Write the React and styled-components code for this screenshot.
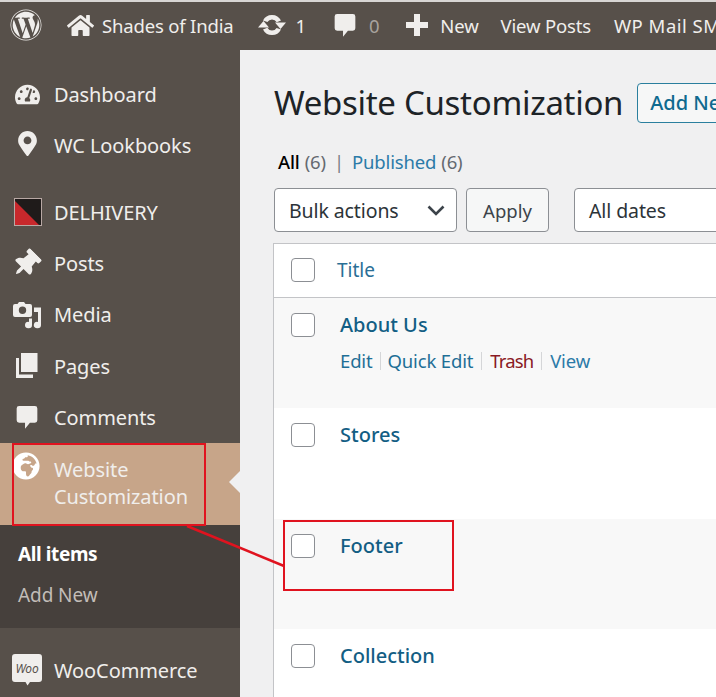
import styled, { createGlobalStyle } from 'styled-components';
import { FaWordpress, FaHome, FaThumbtack, FaGlobeAfrica, FaTachometerAlt, FaMapMarkerAlt } from 'react-icons/fa';

const Global = createGlobalStyle`
  html, body { margin: 0; padding: 0; background: #f0f0f1; }
  body { font-family: "Noto Sans", "Open Sans", sans-serif; overflow: hidden; }
  * { box-sizing: border-box; }
`;

const Page = styled.div`
  position: relative;
  width: 716px;
  height: 697px;
  overflow: hidden;
  display: flex;
  flex-direction: column;
`;

const TopBar = styled.div`
  height: 50px;
  flex: none;
  display: flex;
  align-items: center;
  background: #57504a;
  border-top: 2px solid #d8d6d4;
  color: #f0eeec;
  font-size: 18.5px;
  white-space: nowrap;
  padding: 0 0 2px 10px;
`;

const BarItem = styled.span`
  display: flex;
  align-items: center;
  flex: none;
  margin-left: ${p => p.$ml || 0}px;
  gap: ${p => p.$gap || 0}px;
  color: ${p => p.$dim ? '#a8a39e' : 'inherit'};
  letter-spacing: ${p => p.$wide ? '0.5px' : '-0.17px'};
`;

const Body = styled.div`
  flex: 1;
  display: flex;
  min-height: 0;
`;

const Sidebar = styled.nav`
  width: 240px;
  flex: none;
  background: #57504a;
  padding-top: 19px;
  color: #f0eeec;
`;

const MenuItem = styled.div`
  position: relative;
  display: flex;
  align-items: ${p => p.$tall ? 'flex-start' : 'center'};
  height: ${p => p.$tall ? 82 : 51.2}px;
  margin-top: ${p => p.$sep || 0}px;
  padding: ${p => p.$tall ? '13px 0 0' : 0};
  background: ${p => p.$active ? '#c7a589' : 'transparent'};
  font-size: 20px;
  line-height: 27px;
  letter-spacing: -0.1px;
`;

const MenuIcon = styled.span`
  width: 54px;
  flex: none;
  display: flex;
  justify-content: center;
  transform: translate(${p => p.$dx ?? 0}px, ${p => p.$dy ?? 0}px);
`;

const Notch = styled.span`
  position: absolute;
  right: 0;
  top: 28px;
  border: 11px solid transparent;
  border-right-color: #f0f0f1;
  border-left-width: 0;
`;

const SubMenu = styled.div`
  height: 103px;
  background: #46403c;
  padding: 9px 18px;
  font-size: 19px;
`;

const SubItem = styled.div`
  height: 41px;
  display: flex;
  align-items: center;
  font-weight: ${p => p.$current ? 700 : 400};
  color: ${p => p.$current ? '#ffffff' : '#c2bdb8'};
  letter-spacing: ${p => p.$current ? '-0.4px' : '-0.1px'};
`;

const Main = styled.main`
  flex: 1;
  min-width: 0;
  padding: 0 0 0 33px;
  overflow: hidden;
`;

const HeadRow = styled.div`
  display: flex;
  align-items: center;
  height: 39px;
  margin-top: 33px;
  white-space: nowrap;
`;

const Heading = styled.h1`
  margin: 0 0 0 1px;
  font-size: 33px;
  font-weight: 400;
  color: #1d2327;
  letter-spacing: -0.3px;
`;

const AddNew = styled.span`
  margin-left: 14px;
  height: 40px;
  flex: none;
  border: 1px solid #2a7f9e;
  border-radius: 4px;
  padding: 0 12px;
  display: flex;
  align-items: center;
  background: #f6f7f7;
  color: #0f6a8f;
  font-size: 20px;
  font-weight: 500;
`;

const Filters = styled.div`
  margin: 26px 0 0 5px;
  height: 26px;
  display: flex;
  align-items: center;
  gap: 5px;
  font-size: 18.5px;
  color: #646970;
  letter-spacing: -0.15px;
  white-space: nowrap;
`;

const FilterCurrent = styled.span`
  color: #000;
  font-weight: 500;
`;

const FilterLink = styled.span`
  color: #2c7ba8;
`;

const Divider = styled.span`
  color: #7b8086;
  margin: 0 3px;
`;

const Toolbar = styled.div`
  display: flex;
  margin: 14px 0 0 1px;
  white-space: nowrap;
`;

const SelectBox = styled.div`
  width: ${p => p.$w}px;
  height: 44px;
  flex: none;
  margin-left: ${p => p.$ml || 0}px;
  display: flex;
  align-items: center;
  justify-content: space-between;
  padding: 0 11px 0 14px;
  background: #fff;
  border: 1px solid #8c8f94;
  border-radius: 4px;
  font-size: 19.5px;
  color: #2c3338;
  letter-spacing: -0.1px;
`;

const ApplyButton = styled.div`
  width: 83px;
  height: 44px;
  flex: none;
  margin-left: 9px;
  display: flex;
  align-items: center;
  justify-content: center;
  background: #f6f7f7;
  border: 1px solid #8c8f94;
  border-radius: 4px;
  font-size: 18.5px;
  color: #3c434a;
`;

const Table = styled.div`
  margin-top: 11px;
  margin-right: -2px;
  border: 1px solid #c3c4c7;
  border-right: 0;
  border-bottom: 0;
  background: #fff;
`;

const HeaderRow = styled.div`
  height: 54px;
  display: flex;
  align-items: center;
  padding: 0 0 2px 17px;
  border-bottom: 1px solid #c3c4c7;
  color: #2a6f96;
  font-size: 19px;
`;

const Row = styled.div`
  height: 110.3px;
  display: flex;
  align-items: flex-start;
  padding: 15px 0 0 17px;
  background: ${p => p.$odd ? '#f8f8f8' : '#fff'};
`;

const Check = styled.span`
  width: 24px;
  height: 24px;
  flex: none;
  display: block;
  background: #fff;
  border: 1px solid #8c8f94;
  border-radius: 4px;
  margin-right: ${p => p.$mr}px;
`;

const RowTitle = styled.div`
  color: #135e84;
  font-size: 20px;
  font-weight: 500;
  line-height: 24px;
`;

const RowActions = styled.div`
  display: flex;
  align-items: center;
  margin-top: 12px;
  font-size: 18.5px;
  line-height: 24px;
  letter-spacing: -0.15px;
  white-space: nowrap;
`;

const ActionLink = styled.span`
  color: ${p => p.$color || '#1f6f96'};
  letter-spacing: ${p => p.$tight ? '-0.9px' : 'inherit'};
`;

const ActionSep = styled.span`
  width: 1px;
  height: 18px;
  margin: 0 ${p => p.$gap || 8}px;
  background: #d5d6d8;
`;

const MarkBox = styled.div`
  position: absolute;
  left: ${p => p.$x}px;
  top: ${p => p.$y}px;
  width: ${p => p.$w}px;
  height: ${p => p.$h}px;
  border: 2px solid #e0131f;
`;

const MarkLine = styled.svg`
  position: absolute;
  left: 0;
  top: 0;
  pointer-events: none;
`;

function CommentIcon({ size = 22, color = '#f0eeec' }) {
  return (
    <svg width={size} height={size * 1.12} viewBox="0 0 22 25" fill={color}>
      <path d="M3 1h16a2.500 2.500 0 0 1 2.500 2.500v12A2.500 2.500 0 0 1 19 18h-5l-5 6v-6H3a2.500 2.500 0 0 1-2.500-2.500v-12A2.500 2.500 0 0 1 3 1z" />
    </svg>
  );
}

function PlusIcon() {
  return (
    <svg width="22" height="22" viewBox="0 0 22 22" fill="#f0eeec">
      <path d="M8 0h6v8h8v6h-8v8H8v-8H0V8h8z" />
    </svg>
  );
}

function UpdateIcon() {
  return (
    <svg width="28" height="24" viewBox="0 0 28 24" fill="#f0eeec">
      <path d="M14 2a10 10 0 0 1 9 5.600l-4.300 1.600A5.400 5.400 0 0 0 14 6.500a5.400 5.400 0 0 0-4.600 2.600L5 7.500A10 10 0 0 1 14 2z" />
      <path d="M17 9.500h11L22.500 16z" />
      <path d="M14 22a10 10 0 0 1-9-5.600l4.300-1.600a5.400 5.400 0 0 0 4.700 2.700 5.400 5.400 0 0 0 4.600-2.600l4.400 1.600A10 10 0 0 1 14 22z" />
      <path d="M11 14.500H0L5.500 8z" />
    </svg>
  );
}

function MediaIcon() {
  return (
    <svg width="28" height="28" viewBox="0 0 28 28" fill="#f0eeec">
      <path fillRule="evenodd" d="M6 1h5l1.500 2H17a2 2 0 0 1 2 2v9a2 2 0 0 1-2 2H2a2 2 0 0 1-2-2V5a2 2 0 0 1 2-2h2.500zM9.500 5.500a3.700 3.700 0 1 0 0 7.400 3.700 3.700 0 0 0 0-7.400z" />
      <path d="M21 6.500h7v17.500a3.600 3.200 0 1 1-3-3.100V11h-4z" />
      <path d="M16 17.500h3V24a3.500 3.200 0 1 1-3-3.100z" />
    </svg>
  );
}

function PagesIcon() {
  return (
    <svg width="22" height="26" viewBox="0 0 22 26" fill="#f0eeec">
      <path d="M5 0h16.500v19H5z" />
      <path d="M0 5h3v16.500h14V25H0z" />
    </svg>
  );
}

function DelhiveryIcon() {
  return (
    <svg width="28" height="28" viewBox="0 0 28 28">
      <rect x="0.500" y="0.500" width="27" height="27" fill="#1f1b1a" stroke="#b8a8a4" />
      <path d="M1 3l24 24H1z" fill="#c8282c" />
    </svg>
  );
}

function WooIcon() {
  return (
    <svg width="30" height="32" viewBox="0 0 30 32">
      <path d="M3 0h24a3 3 0 0 1 3 3v22a3 3 0 0 1-3 3H18l-2.500 3.500-2-3.500H3a3 3 0 0 1-3-3V3a3 3 0 0 1 3-3z" fill="#f0eeec" />
      <text x="15" y="19" textAnchor="middle" fontSize="12" fontStyle="italic" fill="#59524c" fontFamily="Noto Sans, sans-serif">Woo</text>
    </svg>
  );
}

function Chevron() {
  return (
    <svg width="18" height="11" viewBox="0 0 18 11" fill="none" stroke="#3c434a" strokeWidth="2.600">
      <path d="M1.500 1.500L9 9l7.500-7.500" />
    </svg>
  );
}

const posts = ['About Us', 'Stores', 'Footer', 'Collection'];

function App() {
  return (
    <Page>
      <Global />
      <TopBar>
        <BarItem><FaWordpress size={32} /></BarItem>
        <BarItem $ml={25}><FaHome size={27} /></BarItem>
        <BarItem $ml={8}>Shades of India</BarItem>
        <BarItem $ml={24} $gap={10}><UpdateIcon />1</BarItem>
        <BarItem $ml={28}><CommentIcon /></BarItem>
        <BarItem $ml={13} $dim>0</BarItem>
        <BarItem $ml={27}><PlusIcon /></BarItem>
        <BarItem $ml={12}>New</BarItem>
        <BarItem $ml={22}>View Posts</BarItem>
        <BarItem $ml={23} $wide>WP Mail SMTP</BarItem>
      </TopBar>
      <Body>
        <Sidebar>
          <MenuItem><MenuIcon><FaTachometerAlt size={25} /></MenuIcon>Dashboard</MenuItem>
          <MenuItem><MenuIcon $dy={-2}><FaMapMarkerAlt size={25} /></MenuIcon>WC Lookbooks</MenuItem>
          <MenuItem $sep={15.5}><MenuIcon $dx={1}><DelhiveryIcon /></MenuIcon>DELHIVERY</MenuItem>
          <MenuItem><MenuIcon $dx={-1}><FaThumbtack size={28} style={{ transform: 'rotate(45deg)' }} /></MenuIcon>Posts</MenuItem>
          <MenuItem><MenuIcon><MediaIcon /></MenuIcon>Media</MenuItem>
          <MenuItem><MenuIcon><PagesIcon /></MenuIcon>Pages</MenuItem>
          <MenuItem><MenuIcon><CommentIcon /></MenuIcon>Comments</MenuItem>
          <MenuItem $active $tall>
            <MenuIcon $dx={-1} $dy={-4}><FaGlobeAfrica size={28} color="#fff" /></MenuIcon>
            <span>Website<br />Customization</span>
            <Notch />
          </MenuItem>
          <SubMenu>
            <SubItem $current>All items</SubItem>
            <SubItem>Add New</SubItem>
          </SubMenu>
          <MenuItem $sep={17}><MenuIcon><WooIcon /></MenuIcon>WooCommerce</MenuItem>
        </Sidebar>
        <Main>
          <HeadRow>
            <Heading>Website Customization</Heading>
            <AddNew>Add New</AddNew>
          </HeadRow>
          <Filters>
            <FilterCurrent>All</FilterCurrent> (6)
            <Divider>|</Divider>
            <FilterLink>Published</FilterLink> (6)
          </Filters>
          <Toolbar>
            <SelectBox $w={183}>Bulk actions<Chevron /></SelectBox>
            <ApplyButton>Apply</ApplyButton>
            <SelectBox $w={200} $ml={25}>All dates</SelectBox>
          </Toolbar>
          <Table>
            <HeaderRow><Check $mr={22} />Title</HeaderRow>
            {posts.map((title, i) => (
              <Row key={title} $odd={i % 2 === 0}>
                <Check $mr={25} />
                <div>
                  <RowTitle>{title}</RowTitle>
                  {i === 0 && (
                    <RowActions>
                      <ActionLink>Edit</ActionLink><ActionSep $gap={7} />
                      <ActionLink>Quick Edit</ActionLink><ActionSep />
                      <ActionLink $color="#8a1a24" $tight>Trash</ActionLink><ActionSep />
                      <ActionLink $color="#2c7ba8">View</ActionLink>
                    </RowActions>
                  )}
                </div>
              </Row>
            ))}
          </Table>
        </Main>
      </Body>
      <MarkBox $x={12} $y={443} $w={194} $h={83} />
      <MarkBox $x={283} $y={520} $w={171} $h={71} />
      <MarkLine width="716" height="697">
        <line x1="187" y1="526" x2="284" y2="566" stroke="#e0131f" strokeWidth="2.500" />
      </MarkLine>
    </Page>
  );
}

export default App;
